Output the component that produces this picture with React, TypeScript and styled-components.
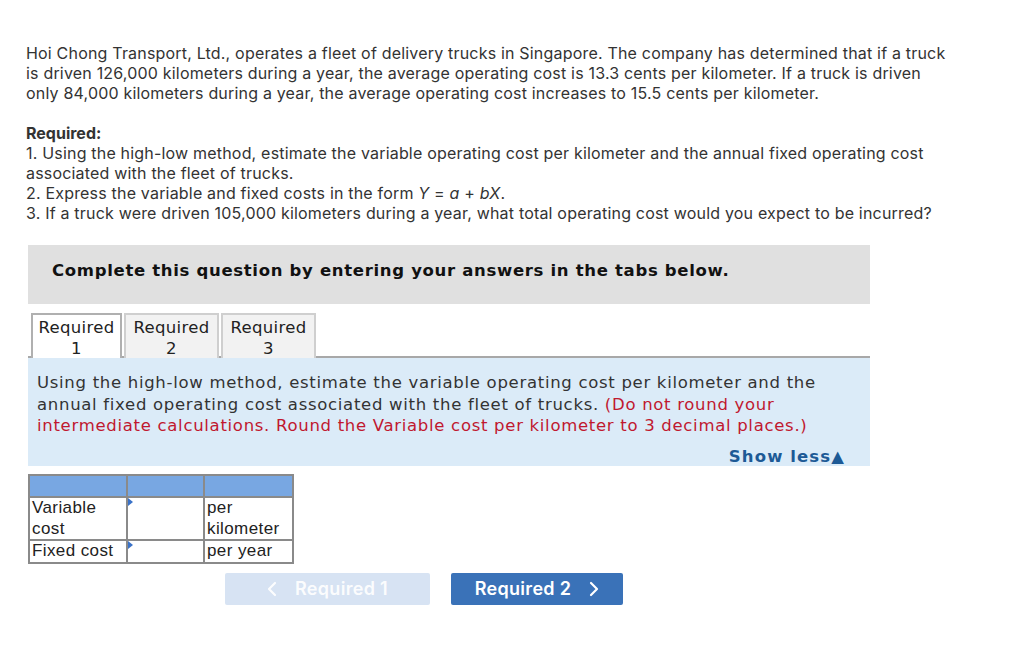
import React from "react";
import styled, { createGlobalStyle } from "styled-components";

const Global = createGlobalStyle`
  html, body { margin: 0; padding: 0; background: #fff; }
  body { font-family: Inter, "Liberation Sans", sans-serif; }
`;

const Page = styled.div`
  padding: 43px 0 0 26px;
  width: 1000px;
  box-sizing: border-box;
`;

const Para = styled.p`
  margin: 0;
  font-family: Inter, sans-serif;
  font-size: 16px;
  letter-spacing: 0.19px;
  line-height: 20px;
  color: #333;
`;

const ReqHead = styled(Para)`
  margin-top: 20px;
  font-weight: 700;
  letter-spacing: 0;
`;

const Italic = styled.span`
  font-style: italic;
`;

const Panel = styled.div`
  margin: 22px 0 0 2px;
  width: 842px;
  font-family: "DejaVu Sans", sans-serif;
`;

const Banner = styled.div`
  background: #e0e0e0;
  height: 59px;
  box-sizing: border-box;
  display: flex;
  align-items: center;
  padding: 0 0 8px 24px;
  font-weight: 700;
  font-size: 16.5px;
  letter-spacing: 0.68px;
  color: #111;
`;

const Tabs = styled.div`
  display: flex;
  gap: 2px;
  margin-top: 9px;
  border-bottom: 2px solid #a8a8a8;
  padding-left: 3px;
`;

const Tab = styled.div<{ $active?: boolean }>`
  width: ${(p) => (p.$active ? 91 : 95)}px;
  height: 45px;
  box-sizing: border-box;
  border: 2px solid ${(p) => (p.$active ? "#b0b0b0" : "#cfcfcf")};
  border-bottom: none;
  background: ${(p) => (p.$active ? "#fff" : "#f2f2f2")};
  text-align: center;
  font-size: 16.5px;
  letter-spacing: 0.3px;
  line-height: 21px;
  padding-top: 2px;
  color: #222;
  margin-bottom: -2px;
  white-space: nowrap;
`;

const Info = styled.div`
  background: #dbebf8;
  padding: 14px 20px 0 9px;
  height: 108px;
  box-sizing: border-box;
  position: relative;
  font-size: 16.5px;
  letter-spacing: 0.7px;
  line-height: 21.5px;
  color: #333;
`;

const Red = styled.span`
  color: #c0182f;
`;

const ShowLess = styled.div`
  position: absolute;
  right: 25px;
  bottom: -1px;
  line-height: 20px;
  font-weight: 700;
  color: #1d5a96;
  font-size: 16.5px;
  letter-spacing: 1.1px;
`;

const Table = styled.table`
  margin: 8px 0 0 2px;
  border-collapse: collapse;
  font-family: "Liberation Sans", Arial, sans-serif;
  font-size: 17px;
  letter-spacing: 0.4px;
  line-height: 20.5px;
  color: #222;
`;

const Th = styled.th<{ $w: number }>`
  background: #78a7e2;
  height: 20px;
  width: ${(p) => p.$w}px;
  border: 2px solid #8a8a8a;
  padding: 0;
`;

const Td = styled.td`
  border: 2px solid #8a8a8a;
  padding: 0 2px;
  vertical-align: top;
  text-align: left;
  white-space: nowrap;
`;

const InputCell = styled.td`
  border: 2px solid #8a8a8a;
  padding: 0;
  position: relative;
`;

const Flag = styled.span`
  position: absolute;
  left: 0;
  top: 0;
  width: 0;
  height: 0;
  border-top: 4px solid transparent;
  border-bottom: 4px solid transparent;
  border-left: 5px solid #3a72c8;
`;

const Nav = styled.div`
  display: flex;
  gap: 21px;
  margin: 9px 0 0 199px;
`;

const NavButton = styled.button<{ $disabled?: boolean; $w: number }>`
  width: ${(p) => p.$w}px;
  height: 32px;
  border: none;
  border-radius: 2px;
  background: ${(p) => (p.$disabled ? "#d7e3f3" : "#3a72b8")};
  color: ${(p) => (p.$disabled ? "rgba(255,255,255,0.92)" : "#fff")};
  font-family: Inter, sans-serif;
  font-weight: 600;
  font-size: 18px;
  letter-spacing: 0.3px;
  display: flex;
  align-items: center;
  justify-content: center;
  gap: 18px;
  padding: 0;
`;

const Chevron = ({ dir }: { dir: "left" | "right" }) => (
  <svg width="10" height="16" viewBox="0 0 10 16">
    <path
      d={dir === "left" ? "M8 2 L2 8 L8 14" : "M2 2 L8 8 L2 14"}
      fill="none"
      stroke="currentColor"
      strokeWidth="2.2"
      strokeLinecap="round"
      strokeLinejoin="round"
    />
  </svg>
);

export default function App() {
  return (
    <>
      <Global />
      <Page>
        <Para>
          Hoi Chong Transport, Ltd., operates a fleet of delivery trucks in Singapore. The company has determined that if a truck
          <br />
          is driven 126,000 kilometers during a year, the average operating cost is 13.3 cents per kilometer. If a truck is driven
          <br />
          only 84,000 kilometers during a year, the average operating cost increases to 15.5 cents per kilometer.
        </Para>
        <ReqHead>Required:</ReqHead>
        <Para>
          1. Using the high-low method, estimate the variable operating cost per kilometer and the annual fixed operating cost
          <br />
          associated with the fleet of trucks.
          <br />
          2. Express the variable and fixed costs in the form <Italic>Y</Italic> = <Italic>a</Italic> + <Italic>b</Italic>
          <Italic>X</Italic>.
          <br />
          3. If a truck were driven 105,000 kilometers during a year, what total operating cost would you expect to be incurred?
        </Para>
        <Panel>
          <Banner>Complete this question by entering your answers in the tabs below.</Banner>
          <Tabs>
            <Tab $active>
              Required
              <br />1
            </Tab>
            <Tab>
              Required
              <br />2
            </Tab>
            <Tab>
              Required
              <br />3
            </Tab>
          </Tabs>
          <Info>
            Using the high-low method, estimate the variable operating cost per kilometer and the
            <br />
            annual fixed operating cost associated with the fleet of trucks.{" "}
            <Red>
              (Do not round your
              <br />
              intermediate calculations. Round the Variable cost per kilometer to 3 decimal places.)
            </Red>
            <ShowLess>Show less▲</ShowLess>
          </Info>
        </Panel>
        <Table>
          <thead>
            <tr>
              <Th $w={96} />
              <Th $w={75} />
              <Th $w={87} />
            </tr>
          </thead>
          <tbody>
            <tr>
              <Td>
                Variable
                <br />
                cost
              </Td>
              <InputCell>
                <Flag />
              </InputCell>
              <Td>
                per
                <br />
                kilometer
              </Td>
            </tr>
            <tr>
              <Td>Fixed cost</Td>
              <InputCell>
                <Flag />
              </InputCell>
              <Td>per year</Td>
            </tr>
          </tbody>
        </Table>
        <Nav>
          <NavButton $disabled $w={205}>
            <Chevron dir="left" />
            Required 1
          </NavButton>
          <NavButton $w={172}>
            Required 2
            <Chevron dir="right" />
          </NavButton>
        </Nav>
      </Page>
    </>
  );
}
